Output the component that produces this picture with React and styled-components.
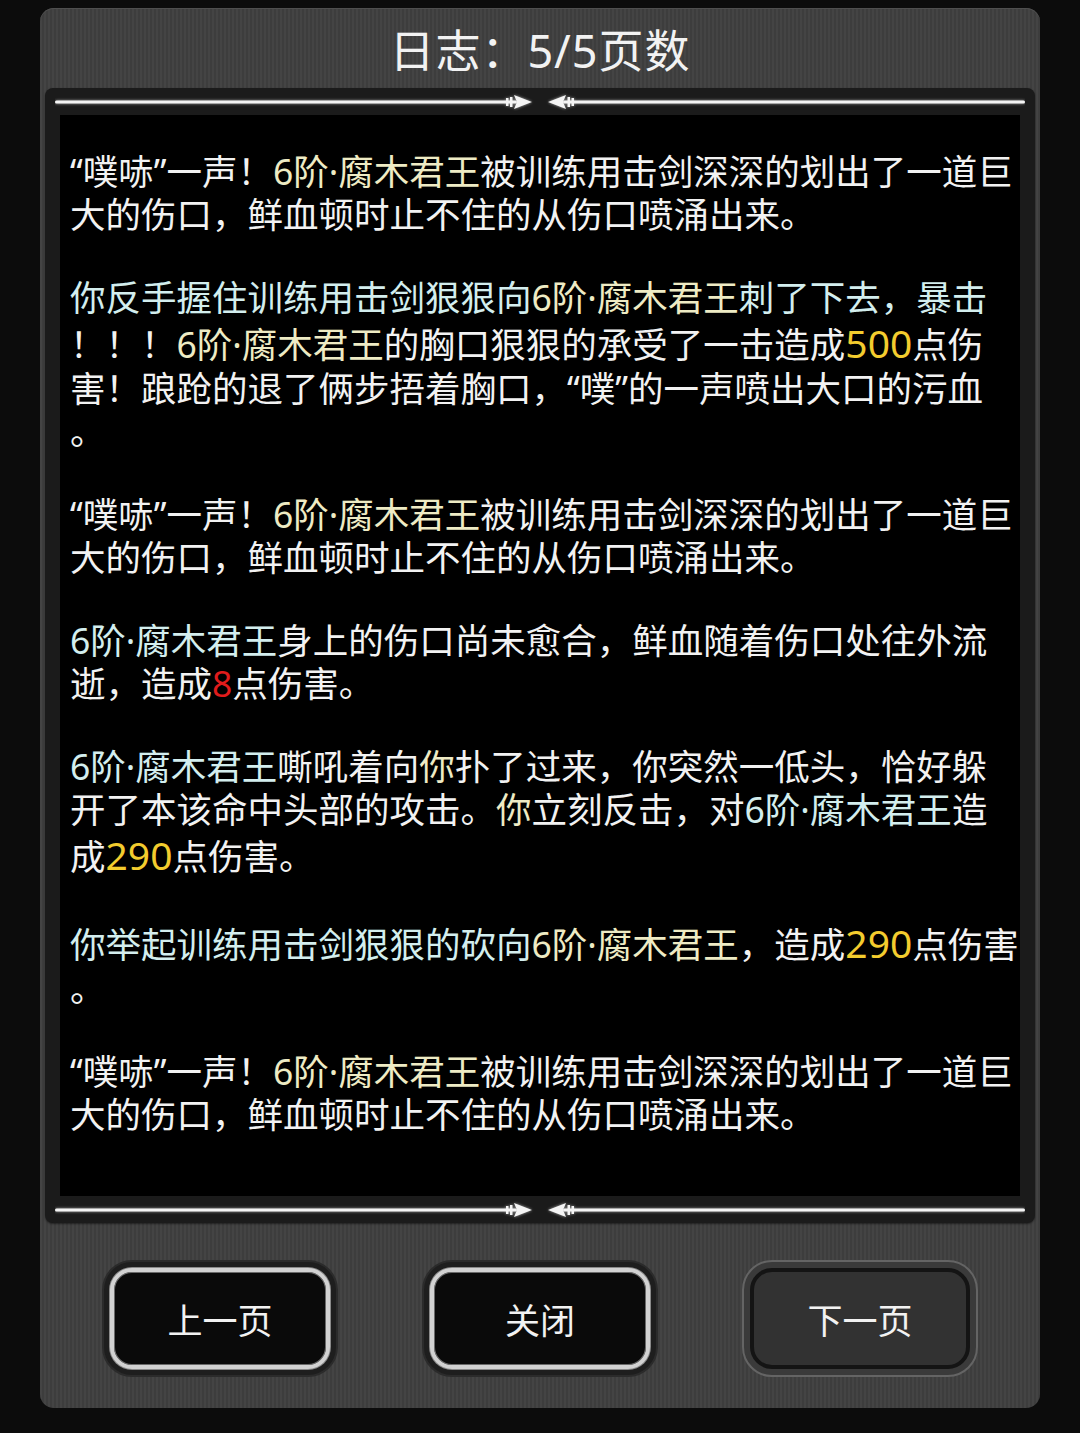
import styled, { createGlobalStyle } from "styled-components";

const GlobalStyle = createGlobalStyle`
  html, body {
    margin: 0;
    padding: 0;
    background: #0c0c0c;
  }
  body {
    font-family: "Noto Sans", "Noto Sans CJK SC", sans-serif;
  }
`;

const NAME = "6阶·腐木君王";

// each line: list of [tone, text]
const paragraphs = [
  [
    [["w", "“噗哧”一声！"], ["y", NAME], ["w", "被训练用击剑深深的划出了一道巨"]],
    [["w", "大的伤口，鲜血顿时止不住的从伤口喷涌出来。"]],
  ],
  [
    [["c", "你反手握住训练用击剑狠狠向"], ["y", NAME], ["c", "刺了下去，暴击"]],
    [["w", "！！！"], ["y", NAME], ["w", "的胸口狠狠的承受了一击造成"], ["gold", "500"], ["w", "点伤"]],
    [["w", "害！踉跄的退了俩步捂着胸口，“噗”的一声喷出大口的污血"]],
    [["w", "。"]],
  ],
  [
    [["w", "“噗哧”一声！"], ["y", NAME], ["w", "被训练用击剑深深的划出了一道巨"]],
    [["w", "大的伤口，鲜血顿时止不住的从伤口喷涌出来。"]],
  ],
  [
    [["c", NAME], ["w", "身上的伤口尚未愈合，鲜血随着伤口处往外流"]],
    [["w", "逝，造成"], ["red", "8"], ["w", "点伤害。"]],
  ],
  [
    [["c", NAME], ["w", "嘶吼着向"], ["y", "你"], ["w", "扑了过来，你突然一低头，恰好躲"]],
    [["w", "开了本该命中头部的攻击。"], ["y", "你"], ["w", "立刻反击，对"], ["c", NAME], ["w", "造"]],
    [["w", "成"], ["gold", "290"], ["w", "点伤害。"]],
  ],
  [
    [["c", "你举起训练用击剑狠狠的砍向"], ["y", NAME], ["w", "，造成"], ["gold", "290"], ["w", "点伤害"]],
    [["w", "。"]],
  ],
  [
    [["w", "“噗哧”一声！"], ["y", NAME], ["w", "被训练用击剑深深的划出了一道巨"]],
    [["w", "大的伤口，鲜血顿时止不住的从伤口喷涌出来。"]],
  ],
];

function ArrowRule() {
  return (
    <svg width="970" height="22" viewBox="0 0 970 22">
      <g fill="#f4f4f4" style={{ filter: "drop-shadow(0 0 1.5px rgba(255,255,255,0.6))" }}>
        <rect x="0" y="9.5" width="462" height="3" rx="1.5" />
        <rect x="451" y="7" width="2.5" height="8" />
        <rect x="455" y="6" width="2.5" height="10" />
        <polygon points="459,4 477,11 459,18 462,11" />
        <polygon points="511,4 493,11 511,18 508,11" />
        <rect x="512.5" y="6" width="2.5" height="10" />
        <rect x="516.5" y="7" width="2.5" height="8" />
        <rect x="508" y="9.5" width="462" height="3" rx="1.5" />
      </g>
    </svg>
  );
}

export default function App() {
  return (
    <Screen>
      <GlobalStyle />
      <Panel>
        <Header>日志：5/5页数</Header>
        <Frame>
          <Rule>
            <ArrowRule />
          </Rule>
          <Log>
            {paragraphs.map((para, i) => (
              <Paragraph key={i}>
                {para.map((line, j) => (
                  <Line key={j}>
                    {line.map(([tone, text], k) => (
                      <Segment key={k} $tone={tone}>
                        {text}
                      </Segment>
                    ))}
                  </Line>
                ))}
              </Paragraph>
            ))}
          </Log>
          <Rule>
            <ArrowRule />
          </Rule>
        </Frame>
        <Footer>
          <ButtonRing>
            <ButtonFace>上一页</ButtonFace>
          </ButtonRing>
          <ButtonRing>
            <ButtonFace>关闭</ButtonFace>
          </ButtonRing>
          <ButtonRing $disabled>
            <ButtonFace $disabled>下一页</ButtonFace>
          </ButtonRing>
        </Footer>
      </Panel>
    </Screen>
  );
}

const tones = {
  w: "#f2f2f2",
  c: "#d3eeee",
  y: "#eeebc4",
  gold: "#f3cc2e",
  red: "#e01c1c",
};

const Screen = styled.div`
  width: 1080px;
  height: 1433px;
  box-sizing: border-box;
  padding: 8px 40px 0;
  background: #0c0c0c;
`;

const Panel = styled.div`
  width: 1000px;
  height: 1400px;
  box-sizing: border-box;
  padding: 0 5px;
  border-radius: 14px;
  display: flex;
  flex-direction: column;
  background: repeating-linear-gradient(90deg, #444444 0 2px, #3d3d3d 2px 4px);
  box-shadow: inset 0 1px 0 #4f4f4f;
`;

const Header = styled.div`
  height: 80px;
  display: flex;
  align-items: center;
  justify-content: center;
  color: #f2f2f2;
  font-size: 45px;
  letter-spacing: 1px;
`;

const Frame = styled.div`
  height: 1135px;
  display: flex;
  flex-direction: column;
  background: #1b1b1b;
  border-radius: 8px;
  box-shadow: 0 1px 2px rgba(0, 0, 0, 0.5);
`;

const Rule = styled.div`
  height: 27px;
  display: flex;
  align-items: center;
  justify-content: center;
`;

const Log = styled.div`
  height: 1081px;
  margin: 0 15px;
  box-sizing: border-box;
  padding: 35px 0 0 10px;
  background: #000;
  overflow: hidden;
`;

const Paragraph = styled.div`
  margin-bottom: 40px;
`;

const Line = styled.div`
  white-space: nowrap;
  font-size: 35.5px;
  line-height: 43px;
  color: #f2f2f2;
`;

const Segment = styled.span`
  color: ${(p) => tones[p.$tone]};
  ${(p) =>
    p.$tone === "gold" &&
    `
    font-size: 39px;
    line-height: 48px;
  `}
`;

const Footer = styled.div`
  flex: 1;
  display: flex;
  align-items: center;
  justify-content: center;
  gap: 84px;
  padding-top: 6px;
`;

const ButtonRing = styled.div`
  width: 236px;
  height: 117px;
  box-sizing: border-box;
  padding: 6px;
  border-radius: 30px;
  background: ${(p) => (p.$disabled ? "#3a3a3a" : "#1e1e1e")};
  border: 2px solid ${(p) => (p.$disabled ? "#646464" : "#2b2b2b")};
`;

const ButtonFace = styled.div`
  width: 100%;
  height: 100%;
  box-sizing: border-box;
  border-radius: 22px;
  display: flex;
  align-items: center;
  justify-content: center;
  font-size: 35px;
  color: #f2f2f2;
  background: ${(p) => (p.$disabled ? "#323232" : "#0a0a0a")};
  border: 4px solid ${(p) => (p.$disabled ? "#141414" : "#d2d2d2")};
  box-shadow: ${(p) =>
    p.$disabled
      ? "none"
      : "inset 0 0 0 1px #6a6a6a, 0 0 0 1px #8a8a8a"};
`;
